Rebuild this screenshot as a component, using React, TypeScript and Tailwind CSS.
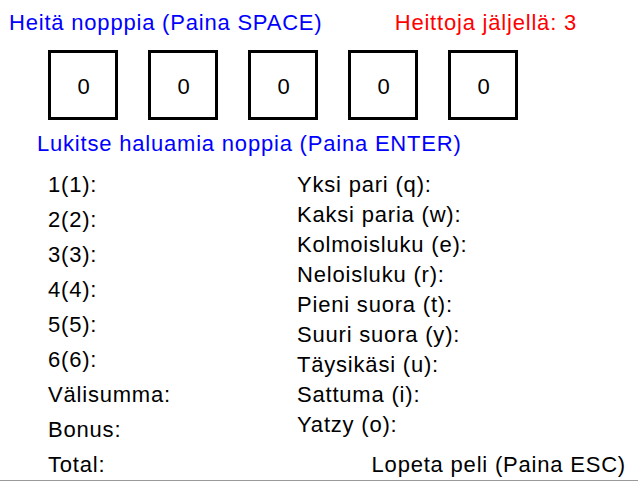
const dice = [0, 0, 0, 0, 0];

const upper = ["1(1):", "2(2):", "3(3):", "4(4):", "5(5):", "6(6):", "Välisumma:", "Bonus:", "Total:"];

const lower = [
  "Yksi pari (q):",
  "Kaksi paria (w):",
  "Kolmoisluku (e):",
  "Neloisluku (r):",
  "Pieni suora (t):",
  "Suuri suora (y):",
  "Täysikäsi (u):",
  "Sattuma (i):",
  "Yatzy (o):",
];

export default function App() {
  return (
    <main className="flex h-[481px] w-[638px] flex-col overflow-hidden border-b border-[#9a9a9a] bg-white font-['Liberation_Sans',Arial,sans-serif] text-[22px] tracking-[0.8px] text-black">
      <div className="mt-[11px] flex h-[24px] shrink-0 items-center pl-[9px] leading-[24px]">
        <span className="text-[#0000ff]">Heitä nopppia (Paina SPACE)</span>
        <span className="ml-auto mr-[61px] text-[#ff0000]">Heittoja jäljellä: 3</span>
      </div>

      <div className="mt-[15px] flex shrink-0 gap-[30px] pl-[48px]">
        {dice.map((value, i) => (
          <div
            className="flex h-[70px] w-[70px] items-center justify-center border-[3px] border-black pl-[1px] pt-[3px] tracking-normal"
            key={i}
          >
            {value}
          </div>
        ))}
      </div>

      <p className="mt-[12px] h-[24px] shrink-0 pl-[37px] leading-[24px] text-[#0000ff]">
        Lukitse haluamia noppia (Paina ENTER)
      </p>

      <div className="mt-[11px] grid shrink-0 grid-cols-[249px_1fr] pl-[48px]">
        <div className="flex flex-col">
          {upper.map((label) => (
            <span className="h-[35px] leading-[35px]" key={label}>
              {label}
            </span>
          ))}
        </div>
        <div className="flex flex-col pt-[3px]">
          {lower.map((label) => (
            <span className="h-[30px] leading-[30px]" key={label}>
              {label}
            </span>
          ))}
          <span className="mt-auto h-[35px] self-end pr-[12px] leading-[35px]">
            Lopeta peli (Paina ESC)
          </span>
        </div>
      </div>
    </main>
  );
}
